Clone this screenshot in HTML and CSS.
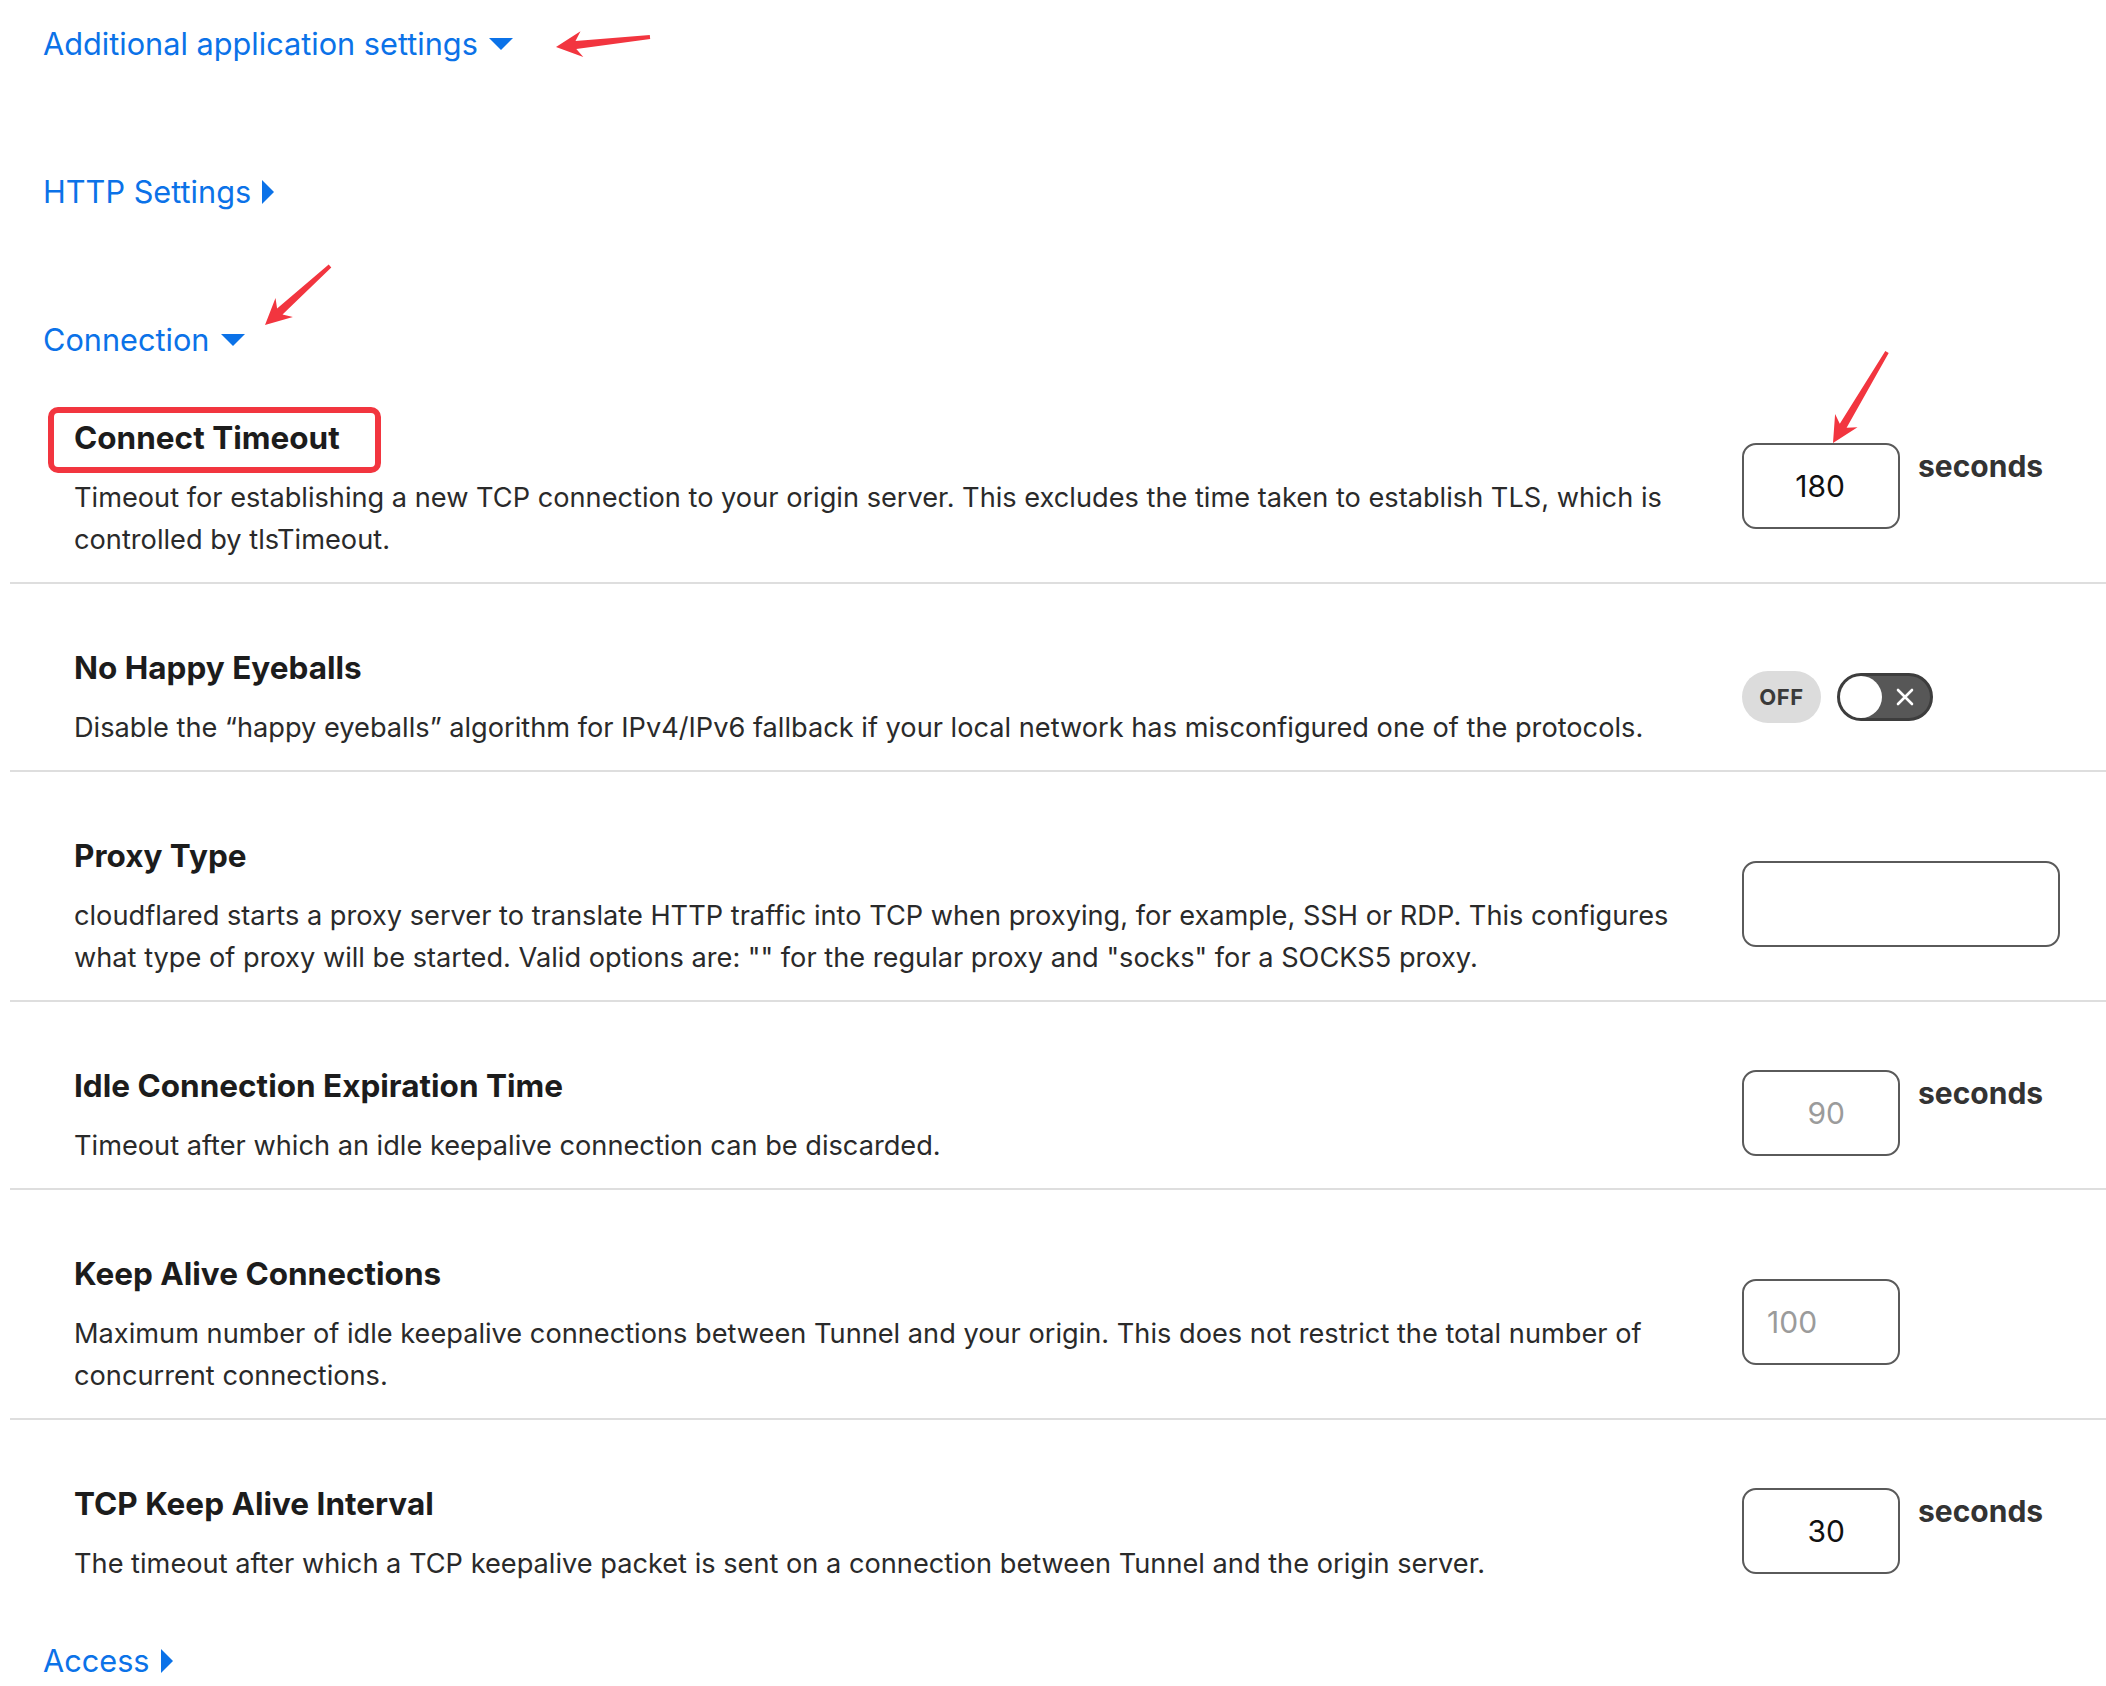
FILE: index.html
```html
<!DOCTYPE html>
<html lang="en">
<head>
<meta charset="utf-8">
<title>Additional application settings</title>
<link rel="stylesheet" href="styles.css">
</head>
<body>
<main class="page">
  <nav class="sections">
    <a class="section-link" href="#">Additional application settings<span class="caret caret--down"></span></a>
    <a class="section-link" href="#">HTTP Settings<span class="caret caret--right"></span></a>
    <a class="section-link" href="#">Connection<span class="caret caret--down"></span></a>
  </nav>

  <div class="settings">
    <div class="setting">
      <div class="setting__text">
        <h3 class="setting__title setting__title--marked">Connect Timeout</h3>
        <p class="setting__desc">Timeout for establishing a new TCP connection to your origin server. This excludes the time taken to establish TLS, which is controlled by tlsTimeout.</p>
      </div>
      <div class="setting__control">
        <input class="field field--short" type="text" value="180">
        <span class="unit">seconds</span>
      </div>
    </div>

    <div class="setting">
      <div class="setting__text">
        <h3 class="setting__title">No Happy Eyeballs</h3>
        <p class="setting__desc">Disable the “happy eyeballs” algorithm for IPv4/IPv6 fallback if your local network has misconfigured one of the protocols.</p>
      </div>
      <div class="setting__control setting__control--toggle">
        <span class="state-pill">OFF</span>
        <span class="switch">
          <span class="switch__knob"></span>
          <svg class="switch__x" viewBox="0 0 20 20" width="20" height="20"><path d="M3 3 L17 17 M17 3 L3 17" stroke="#fff" stroke-width="2.6" stroke-linecap="round" fill="none"/></svg>
        </span>
      </div>
    </div>

    <div class="setting">
      <div class="setting__text">
        <h3 class="setting__title">Proxy Type</h3>
        <p class="setting__desc">cloudflared starts a proxy server to translate HTTP traffic into TCP when proxying, for example, SSH or RDP. This configures what type of proxy will be started. Valid options are: "" for the regular proxy and "socks" for a SOCKS5 proxy.</p>
      </div>
      <div class="setting__control">
        <input class="field field--wide" type="text" value="">
      </div>
    </div>

    <div class="setting">
      <div class="setting__text">
        <h3 class="setting__title">Idle Connection Expiration Time</h3>
        <p class="setting__desc">Timeout after which an idle keepalive connection can be discarded.</p>
      </div>
      <div class="setting__control">
        <input class="field field--short" type="text" placeholder="90">
        <span class="unit">seconds</span>
      </div>
    </div>

    <div class="setting">
      <div class="setting__text">
        <h3 class="setting__title">Keep Alive Connections</h3>
        <p class="setting__desc">Maximum number of idle keepalive connections between Tunnel and your origin. This does not restrict the total number of concurrent connections.</p>
      </div>
      <div class="setting__control">
        <input class="field field--short field--left" type="text" placeholder="100">
      </div>
    </div>

    <div class="setting setting--last">
      <div class="setting__text">
        <h3 class="setting__title">TCP Keep Alive Interval</h3>
        <p class="setting__desc">The timeout after which a TCP keepalive packet is sent on a connection between Tunnel and the origin server.</p>
      </div>
      <div class="setting__control">
        <input class="field field--short" type="text" value="30">
        <span class="unit">seconds</span>
      </div>
    </div>
  </div>

  <nav class="sections sections--after">
    <a class="section-link" href="#">Access<span class="caret caret--right"></span></a>
  </nav>

  <svg class="annotations" width="2106" height="1686" viewBox="0 0 2106 1686">
    <polygon fill="#f2353f" points="556,47 583.3,57.1 576.3,48.9 650.2,39 649.8,35 575.5,40.9 580.5,31.3"/>
    <polygon fill="#f2353f" points="265,325 292.9,317.1 282.5,314.6 331.3,267.5 328.7,264.5 277.1,308.6 275.5,297.9"/>
    <polygon fill="#f2353f" points="1833,443 1857.5,427.2 1846.6,427.8 1888.7,353 1885.3,351 1839.8,423.8 1835.1,414"/>
  </svg>
</main>
</body>
</html>
```

FILE: styles.css
```css
html, body {
  margin: 0;
  padding: 0;
  background: #ffffff;
}

body {
  font-family: "Inter", "Liberation Sans", sans-serif;
  color: #222222;
}

.page {
  position: relative;
  width: 2106px;
  min-height: 1686px;
  box-sizing: border-box;
  padding: 0 0 0 10px;
}

/* collapsible section links */
.sections {
  display: flex;
  flex-direction: column;
  align-items: flex-start;
  gap: 120px;
  padding: 30px 0 0 33px;
}

.sections--after {
  padding-top: 41px;
}

.section-link {
  display: flex;
  align-items: center;
  gap: 11px;
  height: 28px;
  line-height: 28px;
  font-size: 30.7px;
  color: #0b72e8;
  text-decoration: none;
}

.caret {
  display: inline-block;
  width: 0;
  height: 0;
}

.caret--down {
  border-left: 12.5px solid transparent;
  border-right: 12.5px solid transparent;
  border-top: 12px solid #0b72e8;
}

.caret--right {
  border-top: 12px solid transparent;
  border-bottom: 12px solid transparent;
  border-left: 12px solid #0b72e8;
}

/* setting rows */
.setting {
  display: flex;
  align-items: center;
  gap: 62px;
  padding: 64px 46px 21px 64px;
  border-bottom: 2px solid #dedede;
}

.setting--last {
  border-bottom: none;
}

.setting__text {
  flex: 1;
  min-width: 0;
}

.setting__title {
  position: relative;
  margin: 0;
  font-size: 31.5px;
  line-height: 40px;
  font-weight: 700;
  color: #1c1c1c;
}

.setting__title--marked::before {
  content: "";
  position: absolute;
  left: -26px;
  top: -11px;
  width: 333px;
  height: 66px;
  box-sizing: border-box;
  border: 6px solid #f2353f;
  border-radius: 10px;
}

.setting__desc {
  margin: 19px 0 0;
  font-size: 27.2px;
  line-height: 42px;
  color: #2a2a2a;
}

.setting__control {
  width: 318px;
  flex: none;
  display: flex;
  align-items: flex-start;
  gap: 18px;
  margin-bottom: 7px;
}

.field {
  box-sizing: border-box;
  height: 86px;
  border: 2px solid #5a5a5a;
  border-radius: 14px;
  background: #fff;
  font-family: "Inter", "Liberation Sans", sans-serif;
  font-size: 30px;
  color: #111;
  text-align: right;
  padding: 0 53px 0 10px;
  outline: none;
}

.field::placeholder {
  color: #9b9b9b;
}

.field--short {
  width: 158px;
}

.field--wide {
  width: 318px;
}

.field--left {
  text-align: left;
  padding-left: 23px;
  padding-right: 10px;
}

.unit {
  font-size: 30px;
  line-height: 40px;
  font-weight: 700;
  color: #333;
  padding-top: 3px;
}

/* toggle */
.setting__control--toggle {
  align-items: center;
  gap: 16px;
  margin-bottom: 4px;
}

.state-pill {
  display: inline-flex;
  align-items: center;
  justify-content: center;
  width: 79px;
  height: 52px;
  border-radius: 26px;
  background: #dcdcdc;
  font-size: 22px;
  font-weight: 700;
  letter-spacing: 0.5px;
  color: #3a3a3a;
}

.switch {
  box-sizing: border-box;
  display: inline-flex;
  align-items: center;
  width: 96px;
  height: 48px;
  border: 3px solid #3d3d3d;
  border-radius: 24px;
  background: #575757;
}

.switch__knob {
  width: 42px;
  height: 42px;
  border-radius: 50%;
  background: #fff;
  flex: none;
}

.switch__x {
  margin-left: 13px;
}

/* annotation overlay */
.annotations {
  position: absolute;
  left: 0;
  top: 0;
  pointer-events: none;
}
```
